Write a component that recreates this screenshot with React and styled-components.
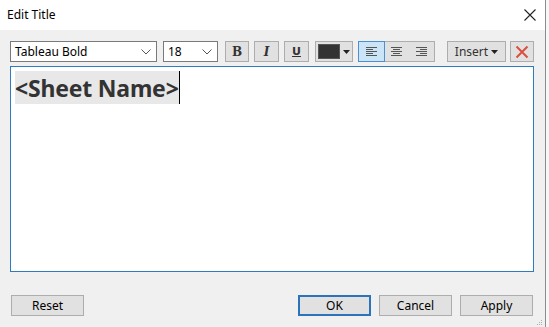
import React from "react";
import styled, { createGlobalStyle } from "styled-components";

const GlobalStyle = createGlobalStyle`
  html, body {
    margin: 0;
    padding: 0;
    background: #f7f7f7;
  }
  body {
    font-family: "Noto Sans", "Open Sans", sans-serif;
    font-size: 12px;
    color: #000;
  }
`;

const Dialog = styled.div`
  width: 545px;
  height: 327px;
  display: flex;
  flex-direction: column;
  border-right: 1px solid #8c8c8c;
  position: relative;
`;

const TitleBar = styled.div`
  height: 30px;
  background: #fff;
  display: flex;
  align-items: center;
  justify-content: space-between;
  padding: 0 9px 0 7px;
  .title {
    font-size: 12px;
    margin-top: -1px;
  }
`;

const Body = styled.div`
  flex: 1;
  background: #f0f0f0;
  padding: 11px 11px 0 10px;
  display: flex;
  flex-direction: column;
`;

const Toolbar = styled.div`
  display: flex;
  align-items: center;
  height: 21px;
`;

const Select = styled.div`
  width: ${(p) => p.w}px;
  height: 21px;
  box-sizing: border-box;
  margin-right: ${(p) => p.mr || 0}px;
  background: #fff;
  border: 1px solid #7a7a7a;
  display: flex;
  align-items: center;
  justify-content: space-between;
  padding: 0 5px 0 4px;
  font-size: 12px;
`;

const ToolButton = styled.div`
  width: ${(p) => p.w || 25}px;
  height: 21px;
  box-sizing: border-box;
  margin-right: ${(p) => p.mr || 0}px;
  background: ${(p) => (p.active ? "#cce4f7" : "#e1e1e1")};
  border: 1px solid ${(p) => (p.active ? "#4d90cf" : "#adadad")};
  display: flex;
  align-items: center;
  justify-content: center;
  gap: 3px;
  font-size: 12px;
  color: #333;
`;

const Glyph = styled.span`
  font-family: "DejaVu Serif", "Liberation Serif", serif;
  font-weight: bold;
  font-size: 12px;
  color: #333;
  font-style: ${(p) => (p.italic ? "italic" : "normal")};
  text-decoration: ${(p) => (p.under ? "underline" : "none")};
  ${(p) => p.sans && `font-family: "DejaVu Sans", sans-serif; font-size: 11px;`}
`;

const Swatch = styled.span`
  width: 22px;
  height: 15px;
  background: #333;
  border: 1px solid #555;
  box-sizing: border-box;
`;

const Group = styled.div`
  display: flex;
  margin-right: ${(p) => p.mr || 0}px;
  border: 1px solid #adadad;
  background: #e1e1e1;
  height: 21px;
  box-sizing: border-box;
`;

const GroupButton = styled.div`
  width: 25px;
  height: 19px;
  box-sizing: border-box;
  display: flex;
  align-items: center;
  justify-content: center;
  background: ${(p) => (p.active ? "#cce4f7" : "transparent")};
  outline: ${(p) => (p.active ? "1px solid #4d90cf" : "none")};
`;

const Editor = styled.div`
  margin-top: 4px;
  height: 206px;
  box-sizing: border-box;
  background: #fff;
  border: 1px solid #2e7bbf;
  padding: 4px 4px;
`;

const TitleText = styled.span`
  display: inline-block;
  background: #e8e8e8;
  color: #333;
  font-family: "Noto Sans", sans-serif;
  font-weight: bold;
  font-size: 23px;
  letter-spacing: -0.2px;
  line-height: 33px;
  padding-top: 1px;
  height: 33px;
  box-sizing: border-box;
  border-right: 1px solid #000;
`;

const Footer = styled.div`
  display: flex;
  align-items: center;
  padding: 23px 1px 0 1px;
  gap: 8px;
  .spacer {
    flex: 1;
  }
`;

const Button = styled.div`
  width: 73px;
  height: 21px;
  box-sizing: border-box;
  background: #e1e1e1;
  border: ${(p) => (p.primary ? "2px solid #2b74bc" : "1px solid #adadad")};
  display: flex;
  align-items: center;
  justify-content: center;
  font-size: 12px;
`;

const Grip = styled.svg`
  position: absolute;
  right: 2px;
  bottom: 1px;
`;

const Chevron = () => (
  <svg width="10" height="6" viewBox="0 0 10 6">
    <path d="M0.5 0.5 L5 5 L9.5 0.5" fill="none" stroke="#555" strokeWidth="1" />
  </svg>
);

const Caret = () => (
  <svg width="7" height="4" viewBox="0 0 7 4">
    <path d="M0 0 H7 L3.5 4 Z" fill="#222" />
  </svg>
);

const AlignIcon = ({ mode }) => {
  const widths = [11, 7, 11, 7, 11];
  return (
    <svg width="11" height="9" viewBox="0 0 11 9">
      {widths.map((w, i) => {
        const x = mode === "left" ? 0 : mode === "right" ? 11 - w : (11 - w) / 2;
        return <rect key={i} x={x} y={i * 2} width={w} height="1" fill="#555" />;
      })}
    </svg>
  );
};

export default function App() {
  return (
    <>
      <GlobalStyle />
      <Dialog>
        <TitleBar>
          <span className="title">Edit Title</span>
          <svg width="12" height="12" viewBox="0 0 12 12">
            <path d="M0.5 0.5 L11.5 11.5 M11.5 0.5 L0.5 11.5" stroke="#222" strokeWidth="1.1" />
          </svg>
        </TitleBar>
        <Body>
          <Toolbar>
            <Select w={147} mr={6}>
              <span>Tableau Bold</span>
              <Chevron />
            </Select>
            <Select w={55} mr={7}>
              <span>18</span>
              <Chevron />
            </Select>
            <ToolButton w={24} mr={5}>
              <Glyph>B</Glyph>
            </ToolButton>
            <ToolButton w={25} mr={5}>
              <Glyph italic>I</Glyph>
            </ToolButton>
            <ToolButton w={25} mr={6}>
              <Glyph sans under>U</Glyph>
            </ToolButton>
            <ToolButton w={38} mr={5}>
              <Swatch />
              <Caret />
            </ToolButton>
            <Group mr={12}>
              <GroupButton active>
                <AlignIcon mode="left" />
              </GroupButton>
              <GroupButton>
                <AlignIcon mode="center" />
              </GroupButton>
              <GroupButton>
                <AlignIcon mode="right" />
              </GroupButton>
            </Group>
            <ToolButton w={59} mr={4}>
              <span>Insert</span>
              <Caret />
            </ToolButton>
            <ToolButton w={24}>
              <svg width="14" height="14" viewBox="0 0 14 14">
                <path d="M1.5 1.5 L12.5 12.5 M12.5 1.5 L1.5 12.5" stroke="#d9503f" strokeWidth="2" />
              </svg>
            </ToolButton>
          </Toolbar>
          <Editor>
            <TitleText>&lt;Sheet Name&gt;</TitleText>
          </Editor>
          <Footer>
            <Button>Reset</Button>
            <span className="spacer" />
            <Button primary>OK</Button>
            <Button>Cancel</Button>
            <Button>Apply</Button>
          </Footer>
        </Body>
        <Grip width="7" height="7" viewBox="0 0 7 7">
          {[
            [5, 1], [5, 3], [3, 3], [5, 5], [3, 5], [1, 5],
          ].map(([x, y], i) => (
            <rect key={i} x={x} y={y} width="1" height="1" fill="#b0b0b0" />
          ))}
        </Grip>
      </Dialog>
    </>
  );
}
